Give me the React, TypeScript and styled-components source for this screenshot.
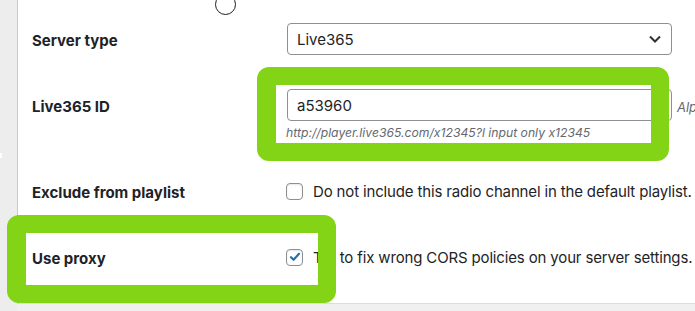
import * as React from "react";
import styled, { createGlobalStyle } from "styled-components";

const GlobalStyle = createGlobalStyle`
  html, body {
    margin: 0;
    padding: 0;
    width: 695px;
    height: 311px;
    overflow: hidden;
    background: #f0f0f1;
  }
  body {
    font-family: Inter, "Noto Sans", sans-serif;
    color: #1d2327;
  }
`;

interface FrameProps {
  $top: number;
  $left: number;
  $width: number;
  $height: number;
}

const ChevronDown = () => (
  <svg width="20" height="20" viewBox="0 0 20 20" fill="none">
    <path d="M5 7.5l5 5 5-5" stroke="#2c3338" strokeWidth="2" />
  </svg>
);

const Checkbox: React.FunctionComponent<{ checked?: boolean }> = ({
  checked,
}) => (
  <Box>
    {checked && (
      <svg width="14" height="14" viewBox="0 0 14 14" fill="none">
        <path
          d="M3 7.2l2.6 2.6L11 3.8"
          stroke="#2271b1"
          strokeWidth="2.2"
          strokeLinecap="round"
          strokeLinejoin="round"
        />
      </svg>
    )}
  </Box>
);

export default function App() {
  return (
    <Page>
      <GlobalStyle />
      <Sidebar>
        <SidebarMark />
      </Sidebar>
      <Main>
        <Panel>
          <RadioRow>
            <Radio />
          </RadioRow>
          <Row>
            <Label>Server type</Label>
            <Field>
              <SelectBox>
                <span>Live365</span>
                <ChevronDown />
              </SelectBox>
            </Field>
          </Row>
          <Row>
            <Label>Live365 ID</Label>
            <Field>
              <InputLine>
                <TextInput>a53960</TextInput>
                <Hint>Alphanumeric ID of your Live365 station</Hint>
              </InputLine>
              <Description>
                http://player.live365.com/x12345?l input only x12345
              </Description>
            </Field>
          </Row>
          <Row>
            <Label>Exclude from playlist</Label>
            <Field>
              <CheckLabel>
                <Checkbox />
                Do not include this radio channel in the default playlist.
              </CheckLabel>
            </Field>
          </Row>
          <Row>
            <Label>Use proxy</Label>
            <Field>
              <CheckLabel>
                <Checkbox checked />
                Try to fix wrong CORS policies on your server settings.
              </CheckLabel>
            </Field>
          </Row>
        </Panel>
      </Main>
      <Frame $top={67} $left={257} $width={412} $height={94} />
      <Frame $top={215} $left={7} $width={329} $height={88} />
    </Page>
  );
}

const Page = styled.div`
  position: relative;
  display: flex;
  width: 695px;
  height: 311px;
  overflow: hidden;
`;

const Sidebar = styled.div`
  flex: none;
  width: 17px;
  padding-top: 153px;
  background: #ededed;
`;

const SidebarMark = styled.div`
  width: 2px;
  height: 5px;
  background: #fff;
`;

const Main = styled.div`
  flex: 1;
  min-width: 0;
`;

const Panel = styled.div`
  background: #fff;
  border-left: 1px solid #c8c8c8;
  border-bottom: 1px solid #dcdcde;
  padding: 0 0 13px 14px;
`;

const RadioRow = styled.div`
  display: flex;
  align-items: flex-start;
  height: 6px;
  padding-left: 183px;
`;

const Radio = styled.div`
  box-sizing: border-box;
  width: 21px;
  height: 21px;
  margin-top: -6px;
  border: 1.3px solid #1d1d1d;
  border-radius: 50%;
  background: #fff;
`;

const Row = styled.div`
  display: grid;
  grid-template-columns: 255px 1fr;
  align-items: start;
  padding: 17px 0;
`;

const Label = styled.div`
  padding-top: 8px;
  font-size: 15px;
  font-weight: 700;
  line-height: 20px;
  white-space: nowrap;
`;

const Field = styled.div`
  min-width: 0;
`;

const SelectBox = styled.div`
  box-sizing: border-box;
  display: flex;
  align-items: center;
  justify-content: space-between;
  width: 385px;
  height: 32px;
  padding: 0 6px 0 9px;
  border: 1px solid #8c8f94;
  border-radius: 4px;
  font-size: 15px;
  background: #fff;
`;

const InputLine = styled.div`
  display: flex;
  align-items: center;
  white-space: nowrap;
`;

const TextInput = styled.div`
  box-sizing: border-box;
  flex: none;
  display: flex;
  align-items: center;
  width: 385px;
  height: 32px;
  padding: 0 9px;
  border: 1px solid #8c8f94;
  border-radius: 4px;
  font-size: 15px;
  background: #fff;
`;

const Hint = styled.span`
  margin: 4px 0 0 5px;
  font-size: 13px;
  font-style: italic;
  color: #646970;
`;

const Description = styled.p`
  margin: 4px 0 0 -1px;
  font-size: 12.2px;
  line-height: 16px;
  font-style: italic;
  color: #646970;
  white-space: nowrap;
`;

const CheckLabel = styled.label`
  display: flex;
  align-items: center;
  gap: 10px;
  height: 24px;
  margin: 4px 0 4px -1px;
  font-size: 15px;
  letter-spacing: -0.15px;
  white-space: nowrap;
`;

const Box = styled.span`
  box-sizing: border-box;
  flex: none;
  display: flex;
  align-items: center;
  justify-content: center;
  width: 17px;
  height: 17px;
  border: 1px solid #8c8f94;
  border-radius: 4px;
  background: #fff;
  box-shadow: inset 0 1px 2px rgba(0, 0, 0, 0.1);
`;

const Frame = styled.div<FrameProps>`
  position: absolute;
  box-sizing: border-box;
  top: ${(p) => p.$top}px;
  left: ${(p) => p.$left}px;
  width: ${(p) => p.$width}px;
  height: ${(p) => p.$height}px;
  border: 18px solid #83d317;
  border-left-width: 19px;
  border-radius: 12px;
  pointer-events: none;
`;
